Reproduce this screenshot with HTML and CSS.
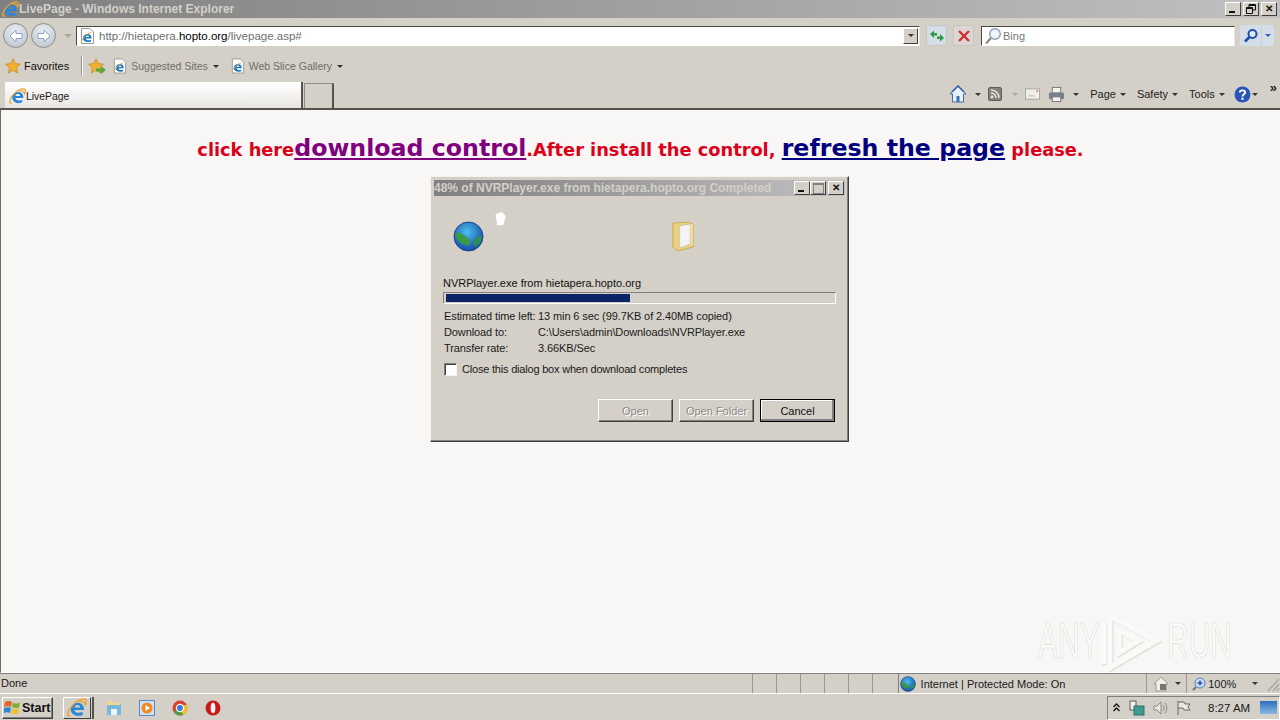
FILE: index.html
```html
<!DOCTYPE html>
<html lang="en">

<head>
  <meta charset="UTF-8">
  <title>LivePage - Windows Internet Explorer</title>
  <link rel="stylesheet" href="styles.css">
</head>

<body>
  <svg class="defs" width="0" height="0">
    <defs>
      <radialGradient id="globe-fill" cx="45%" cy="35%" r="70%">
        <stop offset="0" stop-color="#4cc0f0"/>
        <stop offset="1" stop-color="#123f9c"/>
      </radialGradient>
      <symbol id="ie" viewBox="0 0 16 16">
        <path d="M13.500 9.500H6C6 12 10 12.500 12.500 11V13.500C8 15.500 3 13.500 3 9C3 4.500 8 2.500 11.500 4.500C13 5.500 13.700 7.500 13.500 9.500ZM6 7.500H10.500C10.500 5 6.500 5 6 7.500Z" fill-rule="evenodd" fill="#2a86d8"/>
        <path d="M2.500 14C-.5 15.500 .5 11 3 7.500C6 3.500 11 0 14.500 1C16 2 15.500 4 14.600 5.500C14.300 3.500 12.500 2.500 10 2.700" fill="none" stroke="#e8a838" stroke-width="1.200"/>
      </symbol>
      <symbol id="page-ie" viewBox="0 0 16 16">
        <path d="M2.500 .5H11L14.500 4V15.500H2.500Z" fill="#fff" stroke="#9a9a9a"/>
        <path d="M12.500 10.500H7C7 12.500 10 12.800 12 11.800V13.500C8.500 15 4 13.500 4 10C4 6.500 8 5 10.800 6.500C12 7.300 12.600 9 12.500 10.500ZM7 9H10C10 7.300 7.500 7.300 7 9Z" fill-rule="evenodd" fill="#1c78c8"/>
        <path d="M2 15C3 11 7 6 12 4.500" fill="none" stroke="#e8a838"/>
      </symbol>
      <symbol id="star" viewBox="0 0 16 16">
        <path d="M8 .8L10.200 5.600L15.400 6.200L11.500 9.700L12.600 15L8 12.300L3.400 15L4.500 9.700L.6 6.200L5.800 5.600Z" fill="#f4b030" stroke="#c88a20" stroke-width=".8"/>
      </symbol>
      <symbol id="globe" viewBox="0 0 32 32">
        <circle cx="16" cy="16" r="15" fill="url(#globe-fill)"/>
        <path d="M2 13C6 10 9 14 13 16C16 18 19 22 17 25C12 26 4 22 2 13Z" fill="#3c9a40"/>
        <path d="M22 18C25 16 29 15 30 16C30 21 27 25 23 27C21 24 20 21 22 18Z" fill="#2f8a60"/>
        <circle cx="16" cy="16" r="15" fill="none" stroke="#174a90"/>
      </symbol>
      <symbol id="arrow" viewBox="0 0 16 16">
        <path d="M8 2L2 8L8 14V10.500H14V5.500H8Z" fill="#fff" stroke="#8fa4c0"/>
      </symbol>
    </defs>
  </svg>

  <div class="browser">
    <div class="titlebar">
      <svg class="title-icon"><use href="#ie"/></svg>
      <span class="title-text">LivePage - Windows Internet Explorer</span>
      <div class="win-btns">
        <span class="win-btn min"></span>
        <span class="win-btn">
          <svg width="10" height="10" viewBox="0 0 10 10"><path d="M3 .5H9.500V6H7M3 .5V3M3 1.500H9.500" fill="none" stroke="#111"/><path d="M.5 3.500H6.500V9.500H.5ZM.5 4.500H6.500" fill="none" stroke="#111"/></svg>
        </span>
        <span class="win-btn glyph close">&#10005;</span>
      </div>
    </div>

    <div class="address-row">
      <div class="nav-btns">
        <span class="nav-btn"><svg class="nav-arrow"><use href="#arrow"/></svg></span>
        <span class="nav-btn flip"><svg class="nav-arrow"><use href="#arrow"/></svg></span>
        <span class="nav-drop"></span>
      </div>
      <div class="url-box">
        <svg class="url-icon"><use href="#page-ie"/></svg>
        <span class="url-text">http://hietapera.<b>hopto.org</b>/livepage.asp#</span>
        <span class="url-drop"><i class="caret dark"></i></span>
      </div>
      <span class="tool-btn">
        <svg width="16" height="16" viewBox="0 0 16 16"><path d="M1 6L5 2.500V5H8V7.500H5V10ZM15 10L11 13.500V11H8V8.500H11V6Z" fill="#2f9a40"/></svg>
      </span>
      <span class="tool-btn red">
        <svg width="16" height="16" viewBox="0 0 16 16"><path d="M3 3L13 13M13 3L3 13" stroke="#d03030" stroke-width="2.400"/></svg>
      </span>
      <div class="search-box">
        <svg width="18" height="18" viewBox="0 0 18 18"><circle cx="11" cy="7" r="5.300" fill="#eef4fa" stroke="#8aa0b8" stroke-width="1.400"/><path d="M7 11L2 16.500" stroke="#8a8a80" stroke-width="2"/></svg>
        <span class="search-text">Bing</span>
      </div>
      <span class="search-go">
        <svg width="16" height="16" viewBox="0 0 16 16"><circle cx="9.500" cy="6" r="4" fill="#dfeaf8" stroke="#1f50a8" stroke-width="2"/><path d="M6.500 9L2 13.500" stroke="#1f50a8" stroke-width="2.600"/></svg>
      </span>
      <span class="search-more"><i class="caret blue"></i></span>
    </div>

    <div class="fav-row">
      <svg class="fav-star"><use href="#star"/></svg>
      <span class="fav-label">Favorites</span>
      <span class="fav-sep"></span>
      <span class="fav-add">
        <svg class="fav-star"><use href="#star"/></svg>
        <svg class="fav-arrow" width="10" height="8" viewBox="0 0 10 8"><path d="M0 2.500H5V0L10 4L5 8V5.500H0Z" fill="#58a838"/></svg>
      </span>
      <svg class="fav-page"><use href="#page-ie"/></svg>
      <span class="fav-link">Suggested Sites</span><i class="caret dark"></i>
      <svg class="fav-page gap"><use href="#page-ie"/></svg>
      <span class="fav-link">Web Slice Gallery</span><i class="caret dark"></i>
    </div>

    <div class="tab-row">
      <div class="tab">
        <svg class="tab-icon"><use href="#ie"/></svg>
        <span>LivePage</span>
      </div>
      <div class="tab-new"></div>
      <div class="cmd-bar">
        <svg class="cmd-icon" viewBox="0 0 18 18"><path d="M9 1L1 9H3.500V17H14.500V9H17Z" fill="#e8f0fa" stroke="#3c6ea8"/><path d="M3 7L9 1L15 7" fill="none" stroke="#2f5f9f" stroke-width="1.600"/><rect x="7.500" y="11" width="3" height="6" fill="#3c6ea8"/></svg>
        <i class="caret dark cmd-gap"></i>
        <svg class="cmd-icon small" viewBox="0 0 14 14"><rect x=".5" y=".5" width="13" height="13" rx="1.500" fill="#85827a" stroke="#5f5d56"/><circle cx="4" cy="10" r="1.400" fill="#e8e8e0"/><path d="M3 6A5 5 0 0 1 8 11M3 3A8 8 0 0 1 11 11" fill="none" stroke="#e8e8e0" stroke-width="1.400"/></svg>
        <i class="caret faint cmd-gap"></i>
        <svg class="cmd-icon mail" viewBox="0 0 16 12"><rect x=".5" y=".5" width="15" height="11" fill="#f0eeea" stroke="#a8a69e"/><path d="M4 8H10" stroke="#b8b6ae"/><rect x="12" y="2" width="2" height="2" fill="#d08070"/></svg>
        <svg class="cmd-icon print" viewBox="0 0 18 18"><rect x="4.500" y="1.500" width="9" height="6" fill="#f4f4f4" stroke="#77756e"/><rect x="1" y="7" width="16" height="7" rx="1.500" fill="#77818c"/><rect x="4.500" y="11.500" width="9" height="5" fill="#f4f4f4" stroke="#77756e"/></svg>
        <i class="caret dark print-caret"></i>
        <span class="cmd-item">Page</span><i class="caret dark"></i>
        <span class="cmd-item">Safety</span><i class="caret dark"></i>
        <span class="cmd-item">Tools</span><i class="caret dark"></i>
        <svg class="cmd-icon help" viewBox="0 0 16 16"><circle cx="8" cy="8" r="7.500" fill="#2a55b8"/><path d="M5.500 6C5.500 3.500 10.500 3.500 10.500 6C10.500 7.800 8 7.600 8 9.800" fill="none" stroke="#fff" stroke-width="1.800"/><rect x="7" y="11" width="2" height="2" fill="#fff"/></svg>
        <i class="caret dark"></i>
        <span class="chevrons">&raquo;</span>
      </div>
    </div>

    <div class="content">
      <p class="headline">
        click here<a class="big visited" href="#">download control</a>.After install the control,
        <a class="big" href="#">refresh the page</a> please.
      </p>

      <div class="dialog">
        <div class="dlg-title">
          <span class="dlg-title-text">48% of NVRPlayer.exe from hietapera.hopto.org Completed</span>
          <div class="dlg-btns">
            <span class="win-btn min"></span>
            <span class="win-btn max"></span>
            <span class="win-btn glyph close">&#10005;</span>
          </div>
        </div>
        <div class="dlg-body">
          <div class="anim">
            <svg class="anim-globe"><use href="#globe"/></svg>
            <svg class="anim-paper" viewBox="0 0 14 16"><path d="M2 3L9 .5L13 5L11 14L4 15Z" fill="#fff" stroke="#c8c6c0" stroke-width=".6"/></svg>
            <svg class="anim-folder" viewBox="0 0 24 32"><path d="M1 2L17 1L22 3V27L6 31L1 27Z" fill="#ecd27e" stroke="#c8a850"/><path d="M8 5L19 3V24L8 28Z" fill="#f4f4f4" stroke="#c8c8c0"/><path d="M19 3H22V26L19 24Z" fill="#f0dc98"/></svg>
          </div>
          <div class="file-name">NVRPlayer.exe from hietapera.hopto.org</div>
          <div class="progress"><div class="progress-fill" style="width: 47.5%"></div></div>
          <div class="info">
            <span>Estimated time left:</span><span>13 min 6 sec (99.7KB of 2.40MB copied)</span>
            <span>Download to:</span><span>C:\Users\admin\Downloads\NVRPlayer.exe</span>
            <span>Transfer rate:</span><span>3.66KB/Sec</span>
          </div>
          <div class="check-row">
            <span class="check"></span>
            <span>Close this dialog box when download completes</span>
          </div>
          <div class="dlg-actions">
            <span class="btn disabled">Open</span>
            <span class="btn disabled">Open Folder</span>
            <span class="btn primary">Cancel</span>
          </div>
        </div>
      </div>

      <div class="watermark">
        <span class="wm-word">ANY</span>
        <svg class="wm-logo" width="60" height="66" viewBox="0 0 60 66"><path d="M8 8L54 33L8 60ZM17 22L36 33L17 45ZM2 14V56"/></svg>
        <span class="wm-word">RUN</span>
      </div>
    </div>

    <div class="status-bar">
      <span class="status-done">Done</span>
      <span class="status-cell"></span>
      <span class="status-cell"></span>
      <span class="status-cell"></span>
      <span class="status-cell"></span>
      <span class="status-cell"></span>
      <span class="status-cell"></span>
      <div class="status-zone">
        <svg width="16" height="16"><use href="#globe"/></svg>
        <span>Internet | Protected Mode: On</span>
      </div>
      <div class="status-lock">
        <svg width="16" height="16" viewBox="0 0 16 16"><path d="M1 8L8 1L15 8H13V15H3V8Z" fill="#eeeeea" stroke="#9a9a92"/><rect x="7" y="8" width="6" height="6" fill="#77756e"/></svg>
        <i class="caret dark"></i>
      </div>
      <div class="status-zoom">
        <svg width="14" height="14" viewBox="0 0 14 14"><circle cx="8" cy="6" r="5" fill="#cfe0f4" stroke="#4f7fc0"/><path d="M8 3.500V8.500M5.500 6H10.500" stroke="#2050b0" stroke-width="1.500"/><path d="M4 10L1 13" stroke="#77756e" stroke-width="2"/></svg>
        <span>100%</span>
        <i class="caret dark"></i>
      </div>
      <svg class="grip" width="14" height="16" viewBox="0 0 14 16"><path d="M13 3L2 15M13 8L7 15M13 12L11 15" stroke="#a09e96" stroke-width="1.200"/></svg>
    </div>

    <div class="taskbar">
      <span class="start-btn">
        <svg width="17" height="15" viewBox="0 0 17 15"><path d="M1 2C3 .5 6 .5 8 2L7 7C5 6 3 6 0 7Z" fill="#e2672a"/><path d="M9 2.500C11 4 13 4 16 2.500L15 7.500C13 8.500 10 8.500 8 7Z" fill="#7cb030"/><path d="M0 8C3 7 5 7 7 8L6 13C4 12 2 12 0 13Z" fill="#2f86d0"/><path d="M8 8.500C10 9.500 13 9.500 15 8.500L14 13.500C12 14.500 9 14.500 7 13.500Z" fill="#eec02f"/></svg>
        Start
      </span>
      <span class="task-ie"><svg width="20" height="20"><use href="#ie"/></svg></span>
      <span class="task-grip"></span>
      <span class="quick">
        <svg width="16" height="16" viewBox="0 0 16 16"><path d="M1 4H15V15H1Z" fill="#78b8dc"/><path d="M1 4L2 1H6L7 3H14V5H1Z" fill="#f0d88a"/><rect x="5" y="9" width="6" height="6" fill="#f0f4f8"/></svg>
      </span>
      <span class="quick">
        <svg width="16" height="16" viewBox="0 0 16 16"><rect x=".5" y=".5" width="15" height="15" fill="#cfe0f4" stroke="#5c8ac8"/><circle cx="8" cy="8" r="5.500" fill="#f08a20"/><path d="M6.500 5L11 8L6.500 11Z" fill="#fff"/></svg>
      </span>
      <span class="quick">
        <svg width="16" height="16" viewBox="0 0 16 16"><circle cx="8" cy="8" r="7.500" fill="#d84030"/><path d="M8 8L1.500 11.700A7.500 7.500 0 0 0 11 14.900Z" fill="#4aa048"/><path d="M8 8L11 14.900A7.500 7.500 0 0 0 15 5H8Z" fill="#f0c420"/><circle cx="8" cy="8" r="3.600" fill="#3f78d8" stroke="#f4f4f4" stroke-width="1.300"/></svg>
      </span>
      <span class="quick">
        <svg width="16" height="16" viewBox="0 0 16 16"><circle cx="8" cy="8" r="7.500" fill="#c81818"/><ellipse cx="8" cy="8" rx="2.400" ry="5.200" fill="#f4f4f4"/></svg>
      </span>

      <div class="tray">
        <span class="tray-up">
          <svg width="7" height="9" viewBox="0 0 7 9"><path d="M.5 4L3.500 1L6.500 4M.5 8L3.500 5L6.500 8" fill="none" stroke="#111" stroke-width="1.300"/></svg>
        </span>
        <svg width="16" height="16" viewBox="0 0 16 16"><rect x="1" y="1" width="6" height="9" fill="#f0f0e8" stroke="#5f5d56"/><rect x="5" y="6" width="10" height="9" fill="#3f9a90" stroke="#2f6f70"/></svg>
        <svg width="16" height="16" viewBox="0 0 16 16"><path d="M2 6H5L9 2V14L5 10H2Z" fill="#e8e6e0" stroke="#8a8880"/><path d="M11 5C12.500 7 12.500 9 11 11M13 3C15.500 6 15.500 10 13 13" fill="none" stroke="#8a8880"/></svg>
        <svg width="16" height="16" viewBox="0 0 16 16"><path d="M3 1V15M3 2H9L10 4H15L13 7L15 10H9L8 8H3" fill="#e8e6e0" stroke="#6a6860"/></svg>
        <span class="clock">8:27 AM</span>
        <span class="desktop-btn"></span>
      </div>
    </div>
  </div>
</body>

</html>
```

FILE: styles.css
```css
* {
  box-sizing: border-box;
}

body {
  margin: 0;
  overflow: hidden;
  font-family: "Liberation Sans", Arial, sans-serif;
  font-size: 11px;
  color: #1a1a1a;
  background-color: #d4d0c8;
}

.defs {
  position: absolute;
}

.browser {
  display: flex;
  flex-direction: column;
  width: 1280px;
  height: 720px;
}

.caret {
  display: inline-block;
  flex: none;
  width: 0;
  height: 0;
  border-left: 3px solid transparent;
  border-right: 3px solid transparent;
  border-top: 3px solid #333;
}

.caret.blue {
  border-top-color: #2f5fb0;
}

.caret.faint {
  border-top-color: #a8a69e;
}

/* title bar */
.titlebar {
  display: flex;
  align-items: center;
  height: 18px;
  padding: 0 3px 0 2px;
  background: linear-gradient(to right, #808080, #c0c0c0);
}

.title-icon {
  width: 17px;
  height: 17px;
}

.title-text {
  font-weight: bold;
  font-size: 12px;
  color: #d4d0c8;
}

.win-btns {
  display: flex;
  margin-left: auto;
  gap: 2px;
}

.win-btn {
  position: relative;
  display: flex;
  align-items: center;
  justify-content: center;
  width: 16px;
  height: 14px;
  background: #d4d0c8;
  border: 1px solid;
  border-color: #fff #404040 #404040 #fff;
  font-size: 10px;
  line-height: 1;
  color: #111;
}

.win-btn.close {
  font-weight: bold;
}

.win-btn.min::after {
  content: "";
  position: absolute;
  left: 3px;
  bottom: 2px;
  width: 6px;
  height: 2px;
  background: #111;
}

.win-btn.max::after {
  content: "";
  width: 9px;
  height: 8px;
  border: 1px solid #808080;
  border-top-width: 2px;
}

/* address row */
.address-row {
  display: flex;
  align-items: center;
  height: 34px;
  padding: 1px 0 0 3px;
}

.nav-btns {
  display: flex;
  align-items: center;
  flex: none;
  width: 73px;
}

.nav-btn {
  display: flex;
  align-items: center;
  justify-content: center;
  width: 25px;
  height: 25px;
  margin-right: 3px;
  border-radius: 50%;
  border: 1px solid #8d8d86;
  background: radial-gradient(circle at 50% 30%, #e8edf2, #b6c2d0);
}

.nav-arrow {
  width: 16px;
  height: 16px;
}

.nav-btn.flip .nav-arrow {
  transform: scaleX(-1);
}

.nav-drop {
  width: 0;
  height: 0;
  margin-left: 5px;
  border-left: 4px solid transparent;
  border-right: 4px solid transparent;
  border-top: 4px solid #aaa79f;
}

.url-box {
  display: flex;
  align-items: center;
  flex: none;
  width: 844px;
  height: 20px;
  padding-left: 2px;
  background: #fff;
  border: 1px solid;
  border-color: #4a4a44 #e8e6e0 #fff #4a4a44;
}

.url-icon {
  width: 16px;
  height: 16px;
  flex: none;
}

.url-text {
  margin-left: 4px;
  font-size: 11.500px;
  color: #6e6e6e;
}

.url-text b {
  font-weight: normal;
  color: #000;
}

.url-drop {
  display: flex;
  align-items: center;
  justify-content: center;
  width: 15px;
  height: 16px;
  margin-left: auto;
  margin-right: 1px;
  background: #d4d0c8;
  border: 1px solid;
  border-color: #fff #404040 #404040 #fff;
}

.tool-btn {
  display: flex;
  align-items: center;
  justify-content: center;
  flex: none;
  width: 21px;
  height: 21px;
  margin-left: 6px;
  border: 1px solid #c8c6c0;
  border-radius: 2px;
  background: #d3dee6;
}

.tool-btn.red {
  background: #dcd6d4;
}

.search-box {
  display: flex;
  align-items: center;
  flex: none;
  width: 254px;
  height: 20px;
  margin-left: 7px;
  padding-left: 2px;
  background: #fff;
  border: 1px solid;
  border-color: #4a4a44 #e8e6e0 #fff #4a4a44;
}

.search-text {
  margin-left: 1px;
  color: #777;
}

.search-go {
  display: flex;
  align-items: center;
  justify-content: center;
  flex: none;
  width: 21px;
  height: 21px;
  margin-left: 5px;
  background: #d3dee8;
  border-radius: 2px 0 0 2px;
}

.search-more {
  display: flex;
  align-items: center;
  justify-content: center;
  flex: none;
  width: 12px;
  height: 21px;
  margin-left: 1px;
  background: #d3dee8;
  border-radius: 0 2px 2px 0;
}

/* favorites */
.fav-row {
  display: flex;
  align-items: center;
  height: 30px;
  padding: 0 0 2px 5px;
}

.fav-star {
  width: 16px;
  height: 16px;
}

.fav-label {
  margin-left: 3px;
  color: #111;
}

.fav-sep {
  width: 1px;
  height: 20px;
  margin: 0 5px 0 12px;
  background: #9a988f;
  border-right: 1px solid #fff;
  box-sizing: content-box;
}

.fav-add {
  position: relative;
  width: 18px;
  height: 16px;
  margin-right: 6px;
}

.fav-arrow {
  position: absolute;
  right: 0;
  bottom: 0;
}

.fav-page {
  width: 15px;
  height: 16px;
  margin-right: 4px;
}

.fav-page.gap {
  margin-left: 11px;
}

.fav-link {
  margin-right: 5px;
  font-size: 10.500px;
  color: #6f6d66;
}

/* tabs */
.tab-row {
  display: flex;
  align-items: flex-end;
  height: 26px;
  padding-left: 5px;
}

.tab {
  display: flex;
  align-items: center;
  width: 298px;
  height: 26px;
  padding: 2px 0 0 4px;
  font-size: 10.400px;
  background: linear-gradient(to bottom, #fff, #e8e6e2);
  border-right: 2px solid #55534c;
}

.tab-icon {
  width: 17px;
  height: 17px;
}

.tab-new {
  width: 30px;
  height: 25px;
  margin-left: 1px;
  border: 1px solid #8e8c85;
  border-bottom: none;
  border-right: 2px solid #55534c;
}

.cmd-bar {
  display: flex;
  align-items: center;
  height: 26px;
  margin-left: auto;
  padding: 0 3px 2px 0;
  color: #222;
}

.cmd-icon {
  width: 18px;
  height: 18px;
}

.cmd-icon.small {
  width: 14px;
  height: 14px;
  margin-right: 2px;
}

.cmd-icon.mail {
  width: 15px;
  height: 12px;
  margin-right: 8px;
}

.cmd-icon.print {
  width: 17px;
  height: 17px;
}

.cmd-icon.help {
  width: 17px;
  height: 17px;
  margin-left: 9px;
  margin-right: 1px;
}

.cmd-gap {
  margin: 0 7px 0 8px;
}

.print-caret {
  margin-left: 8px;
}

.cmd-item {
  margin-left: 11px;
  margin-right: 4px;
}

.chevrons {
  align-self: flex-start;
  margin-left: 12px;
  font-size: 13px;
  font-weight: bold;
  line-height: 12px;
}

/* page */
.content {
  position: relative;
  flex: 1;
  background: #f9f7f5;
  border-top: 2px solid #55534c;
  border-left: 1px solid #6c6a63;
  border-bottom: 1px solid #fff;
}

.headline {
  margin: 21px 0 0;
  text-align: center;
  font-family: "DejaVu Sans", Verdana, sans-serif;
  font-weight: bold;
  font-size: 17.800px;
  line-height: 34px;
  color: #dc0018;
}

.big {
  font-size: 23.700px;
  color: #000080;
}

.big.visited {
  color: #800080;
}

/* download dialog */
.dialog {
  position: absolute;
  left: 429px;
  top: 66px;
  width: 419px;
  height: 266px;
  padding: 3px;
  background: #d4d0c8;
  border: 1px solid;
  border-color: #f4f2ee #404040 #404040 #f4f2ee;
  box-shadow: inset -1px -1px 0 #808080;
}

.dlg-title {
  display: flex;
  align-items: center;
  height: 16px;
  padding: 0 1px 0 0;
  background: linear-gradient(to right, #808080, #c0c0c0);
}

.dlg-title-text {
  font-weight: bold;
  font-size: 12px;
  color: #d4d0c8;
}

.dlg-btns {
  display: flex;
  margin-left: auto;
}

.dlg-btns .win-btn:last-child {
  margin-left: 2px;
}

.dlg-body {
  padding: 0 9px;
}

.anim {
  position: relative;
  height: 81px;
}

.anim-globe {
  position: absolute;
  left: 10px;
  top: 25px;
  width: 31px;
  height: 31px;
}

.anim-paper {
  position: absolute;
  left: 50px;
  top: 15px;
  width: 14px;
  height: 16px;
}

.anim-folder {
  position: absolute;
  left: 229px;
  top: 25px;
  width: 23px;
  height: 31px;
}

.file-name {
  color: #111;
}

.progress {
  height: 12px;
  margin-top: 3px;
  padding: 1px 2px;
  border: 1px solid;
  border-color: #808080 #fff #fff #808080;
}

.progress-fill {
  height: 100%;
  background: #0a246a;
}

.info {
  display: grid;
  grid-template-columns: 94px 1fr;
  row-gap: 3px;
  margin-top: 6px;
  padding-left: 1px;
  line-height: 13px;
  letter-spacing: -.1px;
}

.check-row {
  display: flex;
  align-items: center;
  gap: 5px;
  height: 14px;
  margin-top: 7px;
  padding-left: 1px;
  letter-spacing: -.2px;
}

.check {
  width: 13px;
  height: 13px;
  background: #fff;
  border: 1px solid;
  border-color: #808080 #f4f2ee #f4f2ee #808080;
  box-shadow: inset 1px 1px 0 #404040;
}

.dlg-actions {
  display: flex;
  justify-content: flex-end;
  gap: 6px;
  margin-top: 23px;
  padding-right: 1px;
}

.btn {
  display: flex;
  align-items: center;
  justify-content: center;
  width: 75px;
  height: 23px;
  border: 1px solid;
  border-color: #fff #404040 #404040 #fff;
  box-shadow: inset -1px -1px 0 #808080;
}

.btn.disabled {
  color: #8c8a84;
  text-shadow: 1px 1px 0 #fff;
}

.btn.primary {
  outline: 1px solid #000;
  outline-offset: -1px;
  box-shadow: inset -2px -2px 0 #808080, inset 1px 1px 0 #fff;
  color: #111;
}

/* watermark */
.watermark {
  position: absolute;
  left: 1037px;
  top: 498px;
  display: flex;
  align-items: center;
  height: 66px;
}

.wm-word {
  flex: none;
  width: 64px;
  font-size: 50px;
  line-height: 66px;
  white-space: nowrap;
  color: #fbfaf8;
  -webkit-text-stroke: .7px #dddbd7;
  transform: scaleX(.6);
  transform-origin: left center;
}

.wm-logo {
  flex: none;
  margin-right: 5px;
}

.wm-logo path {
  fill: none;
  stroke: #fbfaf8;
  stroke-width: 5;
  filter: drop-shadow(1px 1px 0 #dddbd7);
}

/* status bar */
.status-bar {
  display: flex;
  align-items: center;
  flex: none;
  height: 21px;
  border-bottom: 1px solid #fff;
  border-top: 1px solid #808080;
}

.status-done {
  width: 753px;
  padding: 0 0 1px 1px;
  font-size: 11px;
}

.status-cell {
  width: 24px;
  height: 100%;
  border-left: 1px solid #9a988f;
}

.status-zone {
  display: flex;
  align-items: center;
  gap: 5px;
  width: 249px;
  height: 100%;
  margin-left: 2px;
  padding-left: 1px;
  border-left: 1px solid #808080;
}

.status-lock {
  display: flex;
  align-items: center;
  gap: 6px;
  width: 40px;
  height: 100%;
  padding-left: 6px;
  border-left: 1px solid #9a988f;
}

.status-zoom {
  display: flex;
  align-items: center;
  gap: 2px;
  width: 80px;
  height: 100%;
  padding-left: 5px;
  border-left: 1px solid #9a988f;
}

.status-zoom .caret {
  margin-left: 14px;
}

.grip {
  margin-left: auto;
}

/* taskbar */
.taskbar {
  display: flex;
  align-items: center;
  flex: none;
  height: 26px;
  padding: 1px 0 0 2px;
}

.start-btn {
  display: flex;
  align-items: center;
  gap: 1px;
  width: 51px;
  height: 22px;
  padding-left: 1px;
  border: 1px solid;
  border-color: #fff #404040 #404040 #fff;
  box-shadow: inset -1px -1px 0 #808080;
  font-weight: bold;
  font-size: 12.500px;
  color: #111;
}

.task-ie {
  display: flex;
  align-items: center;
  justify-content: center;
  width: 28px;
  height: 22px;
  margin-left: 10px;
  border: 1px solid;
  border-color: #fff #404040 #404040 #fff;
}

.task-grip {
  width: 2px;
  height: 22px;
  margin: 0 12px 0 1px;
  background: #55534c;
}

.quick {
  display: flex;
  align-items: center;
  justify-content: center;
  width: 16px;
  margin-right: 17px;
}

.tray {
  display: flex;
  align-items: center;
  gap: 7px;
  width: 173px;
  height: 24px;
  margin-left: auto;
  padding-left: 5px;
  border: 1px solid;
  border-color: #808080 #fff #fff #808080;
}

.tray-up {
  display: flex;
  margin-right: 2px;
}

.clock {
  margin-left: 10px;
  font-size: 11.500px;
}

.desktop-btn {
  width: 17px;
  height: 13px;
  margin-left: 3px;
  background: linear-gradient(to bottom, #2a6fc0, #8ab8e0);
}
```
